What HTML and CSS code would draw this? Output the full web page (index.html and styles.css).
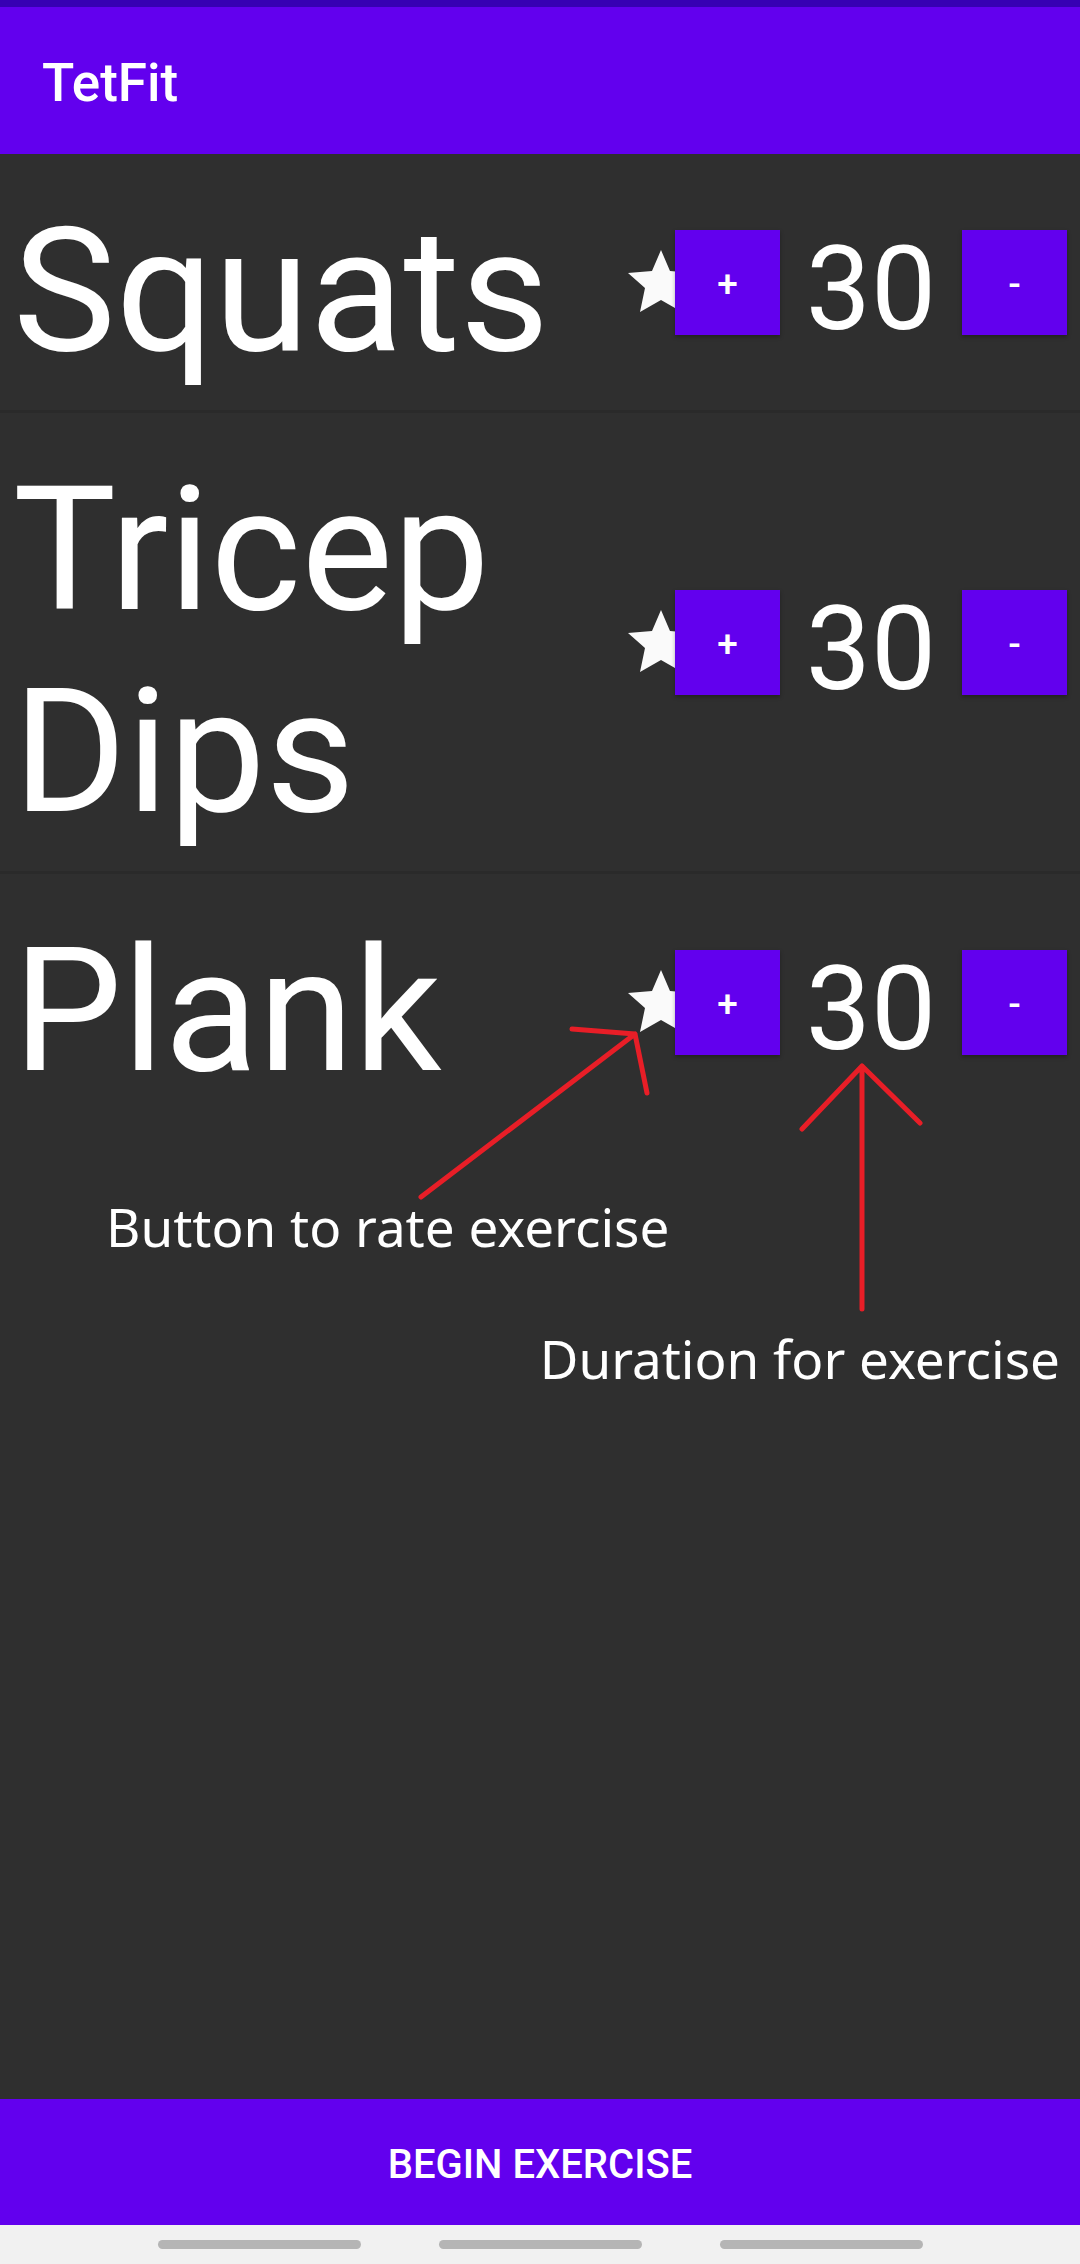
FILE: index.html
```html
<!DOCTYPE html>
<html lang="en">
<head>
<meta charset="utf-8">
<meta name="viewport" content="width=device-width, initial-scale=1">
<title>TetFit</title>
<link rel="stylesheet" href="styles.css">
</head>
<body>
<header class="app-bar">
  <h1 class="app-title">TetFit</h1>
</header>
<main class="content">
  <ul class="exercise-list">
    <li class="exercise">
      <span class="name">Squats</span>
      <button class="rate" type="button" aria-label="Rate Squats"><svg class="star" viewBox="0 0 66 62" aria-hidden="true"><path d="M33 0L42 21L66 23L48 38L54 62L33 50L12 62L17 38L0 23L24 21Z"/></svg></button>
      <button class="step" type="button">+</button>
      <span class="duration">30</span>
      <button class="step" type="button">-</button>
    </li>
    <li class="exercise">
      <span class="name">Tricep Dips</span>
      <button class="rate" type="button" aria-label="Rate Tricep Dips"><svg class="star" viewBox="0 0 66 62" aria-hidden="true"><path d="M33 0L42 21L66 23L48 38L54 62L33 50L12 62L17 38L0 23L24 21Z"/></svg></button>
      <button class="step" type="button">+</button>
      <span class="duration">30</span>
      <button class="step" type="button">-</button>
    </li>
    <li class="exercise">
      <span class="name">Plank</span>
      <button class="rate" type="button" aria-label="Rate Plank"><svg class="star" viewBox="0 0 66 62" aria-hidden="true"><path d="M33 0L42 21L66 23L48 38L54 62L33 50L12 62L17 38L0 23L24 21Z"/></svg></button>
      <button class="step" type="button">+</button>
      <span class="duration">30</span>
      <button class="step" type="button">-</button>
    </li>
  </ul>
  <div class="notes">
    <svg class="arrows" viewBox="0 0 512 288" aria-hidden="true">
      <path d="M5 172L219 9M156 4L219 9L231 68M446 284V41M386 104L446 41L504 98"/>
    </svg>
    <p class="note note-rate">Button to rate exercise</p>
    <p class="note note-duration">Duration for exercise</p>
  </div>
</main>
<button class="begin" type="button">BEGIN EXERCISE</button>
<footer class="gesture-bar">
  <span class="handle"></span>
  <span class="handle"></span>
  <span class="handle"></span>
</footer>
</body>
</html>
```
FILE: styles.css
```css
* {
  box-sizing: border-box;
}

body {
  margin: 0;
  min-height: 100vh;
  display: flex;
  flex-direction: column;
  background: #2f2f2f;
  color: #fff;
  font-family: Roboto, "Liberation Sans", sans-serif;
}

button {
  margin: 0;
  padding: 4px 0 0;
  border: 0;
  border-radius: 0;
  color: inherit;
  font: inherit;
}

.app-bar {
  padding: 45px 42px 39px;
  border-top: 7px solid #3700b3;
  background: #6200ee;
}

.app-title {
  margin: 0;
  font-size: 53px;
  line-height: 63px;
  font-weight: 500;
}

.content {
  position: relative;
  flex: 1;
}

.exercise-list {
  margin: 0;
  padding: 0;
  list-style: none;
}

.exercise {
  display: flex;
  align-items: center;
  padding: 0 13px;
}

.exercise + .exercise {
  border-top: 3px solid #2a2a2a;
}

.name {
  flex: 1;
  padding: 36px 0 18px;
  font-size: 173px;
  line-height: 202px;
}

.rate {
  margin-right: -19px;
  padding: 0 0 2px;
  background: none;
}

.star {
  display: block;
  width: 66px;
  height: 62px;
  fill: #fafafa;
}

.step {
  position: relative;
  width: 105px;
  height: 105px;
  background: #6200ee;
  box-shadow: 0 2px 4px rgba(0, 0, 0, 0.3);
  font-size: 37px;
  font-weight: 500;
}

.duration {
  width: 182px;
  padding-top: 14px;
  font-size: 116px;
  line-height: 136px;
  text-align: center;
}

/* Callouts drawn over the list */
.notes {
  position: absolute;
  top: 871px;
  right: 0;
  width: 1080px;
  pointer-events: none;
}

.arrows {
  position: absolute;
  top: 0;
  left: 416px;
  width: 512px;
  height: 288px;
  fill: none;
  stroke: #e81e27;
  stroke-width: 5;
  stroke-linecap: round;
  stroke-linejoin: round;
}

.note {
  position: absolute;
  margin: 0;
  font-family: "Noto Sans", "Open Sans", sans-serif;
  font-size: 53px;
  line-height: 72px;
  white-space: nowrap;
}

.note-rate {
  top: 166px;
  left: 106px;
}

.note-duration {
  top: 298px;
  right: 20px;
}

.begin {
  height: 126px;
  background: #6200ee;
  font-size: 40px;
  font-weight: 500;
}

.gesture-bar {
  display: flex;
  justify-content: center;
  gap: 78px;
  padding: 15px;
  background: #f1f1f1;
}

.handle {
  width: 203px;
  height: 9px;
  border-radius: 5px;
  background: #b5b5b5;
}
```
